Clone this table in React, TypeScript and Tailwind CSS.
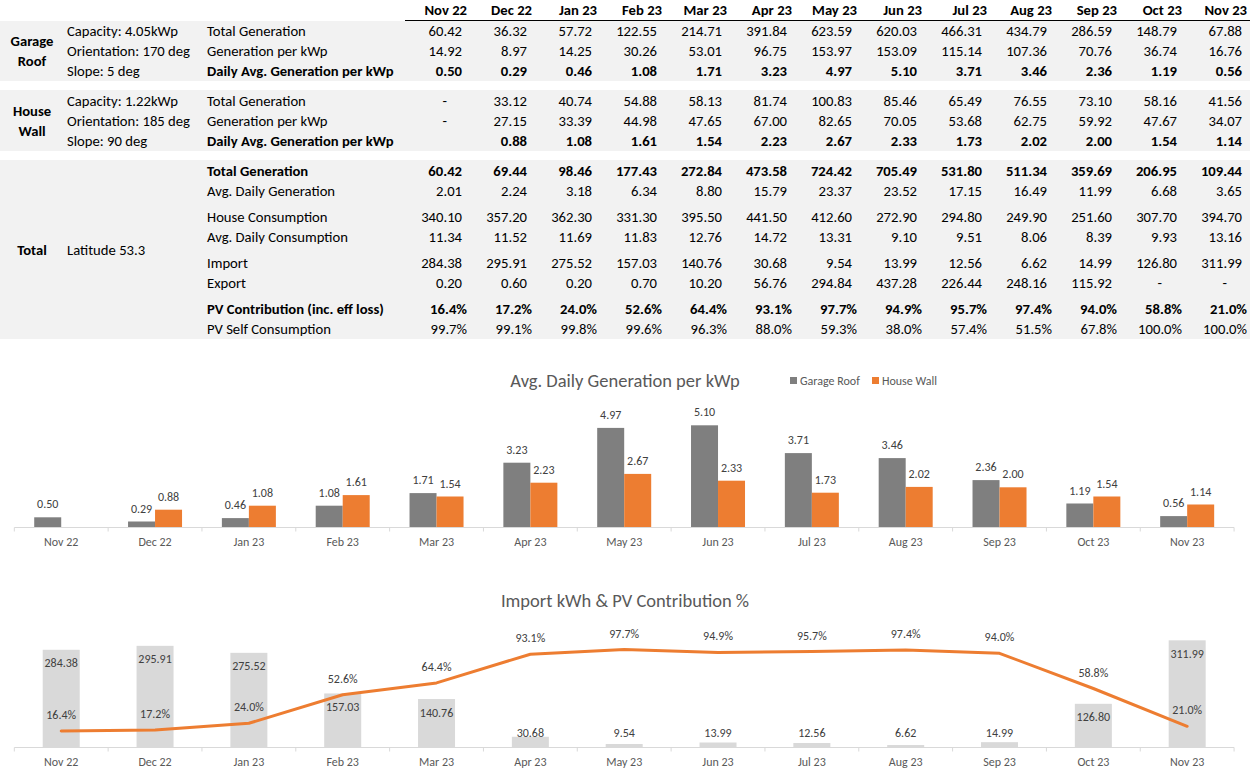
import React from "react";

/* ── Data ───────────────────────────────────────────────────────── */
const MONTHS = ["Nov 22", "Dec 22", "Jan 23", "Feb 23", "Mar 23", "Apr 23", "May 23", "Jun 23", "Jul 23", "Aug 23", "Sep 23", "Oct 23", "Nov 23"];

type Row = { label: string; bold?: boolean; values: string[] };

const GARAGE: Row[] = [
  { label: "Total Generation", values: ["60.42", "36.32", "57.72", "122.55", "214.71", "391.84", "623.59", "620.03", "466.31", "434.79", "286.59", "148.79", "67.88"] },
  { label: "Generation per kWp", values: ["14.92", "8.97", "14.25", "30.26", "53.01", "96.75", "153.97", "153.09", "115.14", "107.36", "70.76", "36.74", "16.76"] },
  { label: "Daily Avg. Generation per kWp", bold: true, values: ["0.50", "0.29", "0.46", "1.08", "1.71", "3.23", "4.97", "5.10", "3.71", "3.46", "2.36", "1.19", "0.56"] },
];

const HOUSE: Row[] = [
  { label: "Total Generation", values: ["-", "33.12", "40.74", "54.88", "58.13", "81.74", "100.83", "85.46", "65.49", "76.55", "73.10", "58.16", "41.56"] },
  { label: "Generation per kWp", values: ["-", "27.15", "33.39", "44.98", "47.65", "67.00", "82.65", "70.05", "53.68", "62.75", "59.92", "47.67", "34.07"] },
  { label: "Daily Avg. Generation per kWp", bold: true, values: ["", "0.88", "1.08", "1.61", "1.54", "2.23", "2.67", "2.33", "1.73", "2.02", "2.00", "1.54", "1.14"] },
];

const TOTAL_GROUPS: Row[][] = [
  [
    { label: "Total Generation", bold: true, values: ["60.42", "69.44", "98.46", "177.43", "272.84", "473.58", "724.42", "705.49", "531.80", "511.34", "359.69", "206.95", "109.44"] },
    { label: "Avg. Daily Generation", values: ["2.01", "2.24", "3.18", "6.34", "8.80", "15.79", "23.37", "23.52", "17.15", "16.49", "11.99", "6.68", "3.65"] },
  ],
  [
    { label: "House Consumption", values: ["340.10", "357.20", "362.30", "331.30", "395.50", "441.50", "412.60", "272.90", "294.80", "249.90", "251.60", "307.70", "394.70"] },
    { label: "Avg. Daily Consumption", values: ["11.34", "11.52", "11.69", "11.83", "12.76", "14.72", "13.31", "9.10", "9.51", "8.06", "8.39", "9.93", "13.16"] },
  ],
  [
    { label: "Import", values: ["284.38", "295.91", "275.52", "157.03", "140.76", "30.68", "9.54", "13.99", "12.56", "6.62", "14.99", "126.80", "311.99"] },
    { label: "Export", values: ["0.20", "0.60", "0.20", "0.70", "10.20", "56.76", "294.84", "437.28", "226.44", "248.16", "115.92", "-", "-"] },
  ],
  [
    { label: "PV Contribution (inc. eff loss)", bold: true, values: ["16.4%", "17.2%", "24.0%", "52.6%", "64.4%", "93.1%", "97.7%", "94.9%", "95.7%", "97.4%", "94.0%", "58.8%", "21.0%"] },
    { label: "PV Self Consumption", values: ["99.7%", "99.1%", "99.8%", "99.6%", "96.3%", "88.0%", "59.3%", "38.0%", "57.4%", "51.5%", "67.8%", "100.0%", "100.0%"] },
  ],
];

const GARAGE_DAILY = [0.5, 0.29, 0.46, 1.08, 1.71, 3.23, 4.97, 5.1, 3.71, 3.46, 2.36, 1.19, 0.56];
const HOUSE_DAILY: (number | null)[] = [null, 0.88, 1.08, 1.61, 1.54, 2.23, 2.67, 2.33, 1.73, 2.02, 2.0, 1.54, 1.14];
const IMPORT = [284.38, 295.91, 275.52, 157.03, 140.76, 30.68, 9.54, 13.99, 12.56, 6.62, 14.99, 126.8, 311.99];
const PV_PCT = [16.4, 17.2, 24.0, 52.6, 64.4, 93.1, 97.7, 94.9, 95.7, 97.4, 94.0, 58.8, 21.0];

/* ── Table pieces ───────────────────────────────────────────────── */
function cellPad(v: string) {
  if (v === "-") return "pr-[23px]";
  if (v.endsWith("%")) return "pr-[3px]";
  return "pr-[8px]";
}

function DataRow({ row }: { row: Row }) {
  return (
    <div className={`flex h-5 leading-5 whitespace-nowrap ${row.bold ? "font-bold" : ""}`}>
      <div className="w-[201px] pl-[3px]">{row.label}</div>
      {row.values.map((v, i) => (
        <div key={i} className={`w-[65px] text-right ${cellPad(v)}`}>
          {v}
        </div>
      ))}
    </div>
  );
}

function Block({ title, notes, rows, className = "" }: { title: string[]; notes: string[]; rows: Row[]; className?: string }) {
  return (
    <div className={`flex bg-[#f2f2f2] ${className}`}>
      <div className="w-[64px] flex flex-col items-center justify-center font-bold leading-5">
        {title.map((t) => (
          <span key={t}>{t}</span>
        ))}
      </div>
      <div className="w-[140px] pl-[3px]">
        {notes.map((n) => (
          <div key={n} className="h-5 leading-5 whitespace-nowrap">
            {n}
          </div>
        ))}
      </div>
      <div>
        {rows.map((r) => (
          <DataRow key={r.label} row={r} />
        ))}
      </div>
    </div>
  );
}

/* ── Chart helpers ──────────────────────────────────────────────── */
const X0 = 14.3;
const CW = 93.83;
const cx = (i: number) => X0 + CW * (i + 0.5);
const AXIS_END = X0 + CW * 13;

function Axis({ y, labelY }: { y: number; labelY: number }) {
  return (
    <g>
      <line x1={X0} x2={AXIS_END} y1={y} y2={y} stroke="#d9d9d9" strokeWidth={1} />
      {Array.from({ length: 14 }, (_, i) => (
        <line key={i} x1={X0 + CW * i} x2={X0 + CW * i} y1={y} y2={y + 4} stroke="#d9d9d9" strokeWidth={1} />
      ))}
      {MONTHS.map((m, i) => (
        <text key={m} x={cx(i)} y={labelY} textAnchor="middle" dominantBaseline="central" fontSize={12} fill="#595959">
          {m}
        </text>
      ))}
    </g>
  );
}

function GenerationChart() {
  const base = 188.3;
  const k = 20;
  return (
    <svg width={1250} height={221} className="block">
      <text x={625} y={41} textAnchor="middle" dominantBaseline="central" fontSize={18.5} fill="#595959">
        Avg. Daily Generation per kWp
      </text>
      <rect x={790} y={38} width={7} height={7} fill="#7f7f7f" />
      <text x={800} y={41.5} dominantBaseline="central" fontSize={12} fill="#595959">
        Garage Roof
      </text>
      <rect x={872} y={38} width={7} height={7} fill="#ed7d31" />
      <text x={882} y={41.5} dominantBaseline="central" fontSize={12} fill="#595959">
        House Wall
      </text>

      {GARAGE_DAILY.map((v, i) => {
        const h = v * k;
        const x = cx(i) - 27;
        return (
          <g key={`g${i}`}>
            <rect x={x} y={base - h} width={27} height={h} fill="#7f7f7f" />
            <text x={x + 13.5} y={base - h - 13} textAnchor="middle" dominantBaseline="central" fontSize={12} fill="#404040">
              {v.toFixed(2)}
            </text>
          </g>
        );
      })}
      {HOUSE_DAILY.map((v, i) => {
        if (v === null) return null;
        const h = v * k;
        const x = cx(i);
        return (
          <g key={`h${i}`}>
            <rect x={x} y={base - h} width={27} height={h} fill="#ed7d31" />
            <text x={x + 13.5} y={base - h - 13} textAnchor="middle" dominantBaseline="central" fontSize={12} fill="#404040">
              {v.toFixed(2)}
            </text>
          </g>
        );
      })}
      <Axis y={188.5} labelY={203} />
    </svg>
  );
}

function ImportChart() {
  const base = 187.3;
  const k = 120 / 350;
  const pts = PV_PCT.map((p, i) => [cx(i), base - p] as const);
  return (
    <svg width={1250} height={219} className="block">
      <text x={625} y={40} textAnchor="middle" dominantBaseline="central" fontSize={18.5} fill="#595959">
        Import kWh &amp; PV Contribution %
      </text>

      {IMPORT.map((v, i) => {
        const h = v * k;
        const top = base - h;
        return (
          <g key={`i${i}`}>
            <rect x={cx(i) - 18.5} y={top} width={37} height={h} fill="#d9d9d9" />
            <text x={cx(i)} y={Math.min(top + 13.5, 173.3)} textAnchor="middle" dominantBaseline="central" fontSize={12} fill="#404040">
              {v.toFixed(2)}
            </text>
          </g>
        );
      })}
      <Axis y={187.5} labelY={202.3} />
      <polyline points={pts.map((p) => p.join(",")).join(" ")} fill="none" stroke="#ed7d31" strokeWidth={3} strokeLinejoin="round" strokeLinecap="round" />
      {PV_PCT.map((p, i) => (
        <text key={`p${i}`} x={cx(i)} y={base - p - 16} textAnchor="middle" dominantBaseline="central" fontSize={12} fill="#404040">
          {p.toFixed(1)}%
        </text>
      ))}
    </svg>
  );
}

/* ── Page ───────────────────────────────────────────────────────── */
export default function App() {
  return (
    <div className="w-[1250px] h-[779px] overflow-hidden bg-white text-black text-[14.67px] font-[Carlito,Lato,sans-serif]">
      {/* Month header */}
      <div className="flex h-[21px]">
        <div className="w-[405px]" />
        {MONTHS.map((m) => (
          <div key={m} className="w-[65px] text-right pr-[3px] pt-px font-bold leading-[19px] border-b border-black">
            {m}
          </div>
        ))}
      </div>

      <Block title={["Garage", "Roof"]} notes={["Capacity: 4.05kWp", "Orientation: 170 deg", "Slope: 5 deg"]} rows={GARAGE} />
      <Block className="mt-[9px] pt-px" title={["House", "Wall"]} notes={["Capacity: 1.22kWp", "Orientation: 185 deg", "Slope: 90 deg"]} rows={HOUSE} />

      {/* Totals */}
      <div className="mt-[9px] pt-px flex bg-[#f2f2f2]">
        <div className="w-[64px] flex items-center justify-center font-bold">Total</div>
        <div className="w-[140px] pl-[3px] flex items-center">Latitude 53.3</div>
        <div className="flex flex-col gap-[6px]">
          {TOTAL_GROUPS.map((g, gi) => (
            <div key={gi}>
              {g.map((r) => (
                <DataRow key={r.label} row={r} />
              ))}
            </div>
          ))}
        </div>
      </div>

      <GenerationChart />
      <ImportChart />
    </div>
  );
}
